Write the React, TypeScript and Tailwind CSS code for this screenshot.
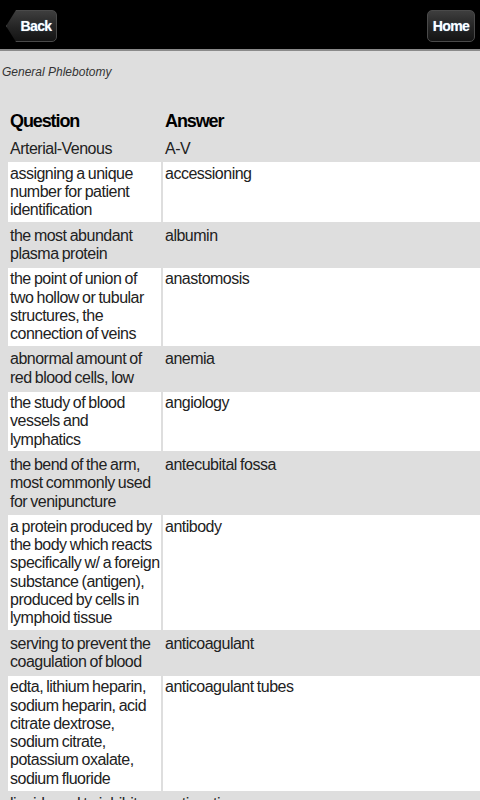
import React from "react";

type Row = { q: string; a: string };

const rows: Row[] = [
  { q: "Arterial-Venous", a: "A-V" },
  { q: "assigning a unique number for patient identification", a: "accessioning" },
  { q: "the most abundant plasma protein", a: "albumin" },
  { q: "the point of union of two hollow or tubular structures, the connection of veins", a: "anastomosis" },
  { q: "abnormal amount of red blood cells, low", a: "anemia" },
  { q: "the study of blood vessels and lymphatics", a: "angiology" },
  { q: "the bend of the arm, most commonly used for venipuncture", a: "antecubital fossa" },
  {
    q: "a protein produced by the body which reacts specifically w/ a foreign substance (antigen), produced by cells in lymphoid tissue",
    a: "antibody",
  },
  { q: "serving to prevent the coagulation of blood", a: "anticoagulant" },
  {
    q: "edta, lithium heparin, sodium heparin, acid citrate dextrose, sodium citrate, potassium oxalate, sodium fluoride",
    a: "anticoagulant tubes",
  },
  { q: "liquid used to inhibit the growth of microorganisms on skin", a: "antiseptic" },
];

function NavButton({ label, back }: { label: string; back?: boolean }) {
  return (
    <button
      className={
        "h-[32px] rounded-[5px] bg-gradient-to-b from-[#3e3e3e] via-[#262626] to-[#141414] border border-[#4a4a4a] text-white text-[14px] font-bold tracking-[-0.6px] [text-shadow:0_0_1px_#6ad]" +
        (back ? " w-[51px] pl-[9px] [clip-path:polygon(10px_0,100%_0,100%_100%,10px_100%,0_50%)]" : " w-[48px]")
      }
    >
      {label}
    </button>
  );
}

export default function App() {
  return (
    <div className="w-[480px] h-[800px] overflow-hidden bg-[#dedede] font-['Liberation_Sans',Arial,sans-serif] text-[#222]">
      <div className="h-[51px] bg-black border-b-2 border-[#8a8a8a] flex items-center justify-between pl-[6px] pr-[5px] pt-[3px]">
        <NavButton label="Back" back />
        <NavButton label="Home" />
      </div>

      <div className="pt-[14px] pl-[2px] text-[12px] leading-[14px] italic text-[#333]">General Phlebotomy</div>

      <div className="mt-[30px] ml-[8px] w-[472px] flex flex-col gap-[2px]">
        <div className="flex gap-[2px] text-[18px] leading-[21px] font-bold tracking-[-1.1px] text-black">
          <div className="w-[153px] px-[2px] pt-[2px] pb-[3px]">Question</div>
          <div className="flex-1 px-[2px] pt-[2px] pb-[3px]">Answer</div>
        </div>
        {rows.map((r, i) => {
          const bg = i % 2 === 1 ? "bg-white" : "";
          return (
            <div key={i} className="flex gap-[2px] text-[16px] leading-[18.3px] tracking-[-0.5px] [word-spacing:-0.8px]">
              <div className={"w-[153px] shrink-0 pl-[2px] pr-0 py-[2.5px] " + bg}>{r.q}</div>
              <div className={"flex-1 px-[2px] py-[2.5px] " + bg}>{r.a}</div>
            </div>
          );
        })}
      </div>
    </div>
  );
}
